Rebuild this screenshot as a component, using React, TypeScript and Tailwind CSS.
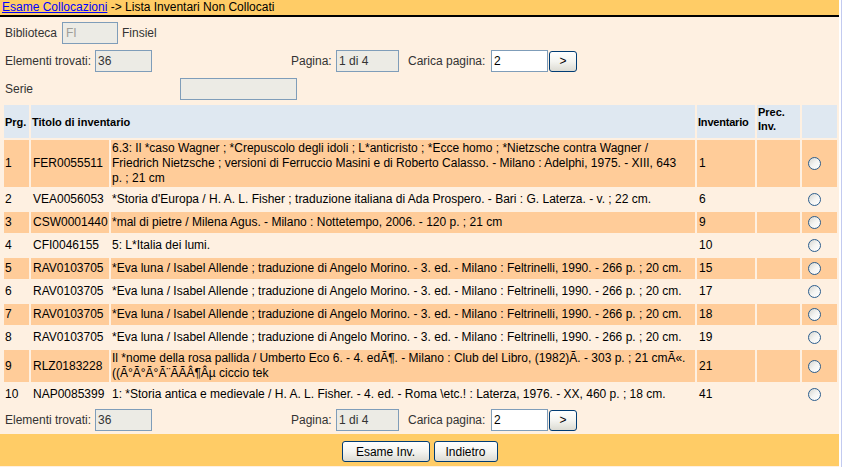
import React from "react";

interface Riga {
  prg: number;
  codice: string;
  titolo: string[];
  inventario: string;
}

const righe: Riga[] = [
  {
    prg: 1,
    codice: "FER0055511",
    titolo: [
      "6.3: Il *caso Wagner ; *Crepuscolo degli idoli ; L*anticristo ; *Ecce homo ; *Nietzsche contra Wagner /",
      "Friedrich Nietzsche ; versioni di Ferruccio Masini e di Roberto Calasso. - Milano : Adelphi, 1975. - XIII, 643",
      "p. ; 21 cm",
    ],
    inventario: "1",
  },
  {
    prg: 2,
    codice: "VEA0056053",
    titolo: ["*Storia d'Europa / H. A. L. Fisher ; traduzione italiana di Ada Prospero. - Bari : G. Laterza. - v. ; 22 cm."],
    inventario: "6",
  },
  {
    prg: 3,
    codice: "CSW0001440",
    titolo: ["*mal di pietre / Milena Agus. - Milano : Nottetempo, 2006. - 120 p. ; 21 cm"],
    inventario: "9",
  },
  { prg: 4, codice: "CFI0046155", titolo: ["5: L*Italia dei lumi."], inventario: "10" },
  {
    prg: 5,
    codice: "RAV0103705",
    titolo: ["*Eva luna / Isabel Allende ; traduzione di Angelo Morino. - 3. ed. - Milano : Feltrinelli, 1990. - 266 p. ; 20 cm."],
    inventario: "15",
  },
  {
    prg: 6,
    codice: "RAV0103705",
    titolo: ["*Eva luna / Isabel Allende ; traduzione di Angelo Morino. - 3. ed. - Milano : Feltrinelli, 1990. - 266 p. ; 20 cm."],
    inventario: "17",
  },
  {
    prg: 7,
    codice: "RAV0103705",
    titolo: ["*Eva luna / Isabel Allende ; traduzione di Angelo Morino. - 3. ed. - Milano : Feltrinelli, 1990. - 266 p. ; 20 cm."],
    inventario: "18",
  },
  {
    prg: 8,
    codice: "RAV0103705",
    titolo: ["*Eva luna / Isabel Allende ; traduzione di Angelo Morino. - 3. ed. - Milano : Feltrinelli, 1990. - 266 p. ; 20 cm."],
    inventario: "19",
  },
  {
    prg: 9,
    codice: "RLZ0183228",
    titolo: [
      "Il *nome della rosa pallida / Umberto Eco 6. - 4. edÃ¶. - Milano : Club del Libro, (1982)Ã. - 303 p. ; 21 cmÃ«.",
      "((Ã°Ã°Ã°Ã¨ÃÃÂ¶Âµ ciccio tek",
    ],
    inventario: "21",
  },
  {
    prg: 10,
    codice: "NAP0085399",
    titolo: ["1: *Storia antica e medievale / H. A. L. Fisher. - 4. ed. - Roma \\etc.! : Laterza, 1976. - XX, 460 p. ; 18 cm."],
    inventario: "41",
  },
];

function Radio() {
  return (
    <span className="block w-[13px] h-[13px] rounded-full border border-[#2c5e8e] bg-gradient-to-br from-[#d6d6d0] via-[#f4f4f2] to-white"></span>
  );
}

function XpButton({ label, className }: { label: string; className?: string }) {
  return (
    <button
      type="button"
      className={
        "h-[21px] rounded-[3px] border border-[#003c74] bg-gradient-to-b from-white via-[#f4f4f0] to-[#dcdbd3] text-[12px] text-black leading-none " +
        (className ?? "")
      }
    >
      {label}
    </button>
  );
}

function Paginazione() {
  return (
    <div className="flex items-center h-[22px] pl-[5px] text-[#333]">
      <span className="w-[90px]">Elementi trovati:</span>
      <input
        readOnly
        value="36"
        className="w-[57px] h-[22px] border border-[#7f9db9] bg-[#ecebe5] px-[2px] text-[#333] outline-none"
      />
      <span className="ml-[139px] w-[45px]">Pagina:</span>
      <input
        readOnly
        value="1 di 4"
        className="w-[63px] h-[22px] border border-[#7f9db9] bg-[#ecebe5] px-[2px] text-[#333] outline-none"
      />
      <span className="ml-[9px] w-[83px]">Carica pagina:</span>
      <input
        readOnly
        value="2"
        className="w-[57px] h-[22px] border border-[#7f9db9] bg-white px-[2px] text-black outline-none"
      />
      <XpButton label=">" className="w-[28px] ml-px" />
    </div>
  );
}

export default function App() {
  return (
    <div className="w-[842px] h-[467px] flex bg-white font-['Liberation_Sans',Arial,sans-serif] text-[12px] text-black overflow-hidden">
      <div className="w-[839px] bg-[#fef0e1] flex flex-col">
        {/* Intestazione */}
        <div className="h-[15px] bg-[#ffcc66] border-b-2 border-black box-content pl-[2px] leading-[15px] whitespace-nowrap">
          <a href="#" className="text-[#0000ff] underline">
            Esame Collocazioni
          </a>
          <span> -&gt; Lista Inventari Non Collocati</span>
        </div>

        {/* Filtri */}
        <div className="flex flex-col gap-[6px] pt-[5px]">
          <div className="flex items-center h-[22px] pl-[5px] text-[#333]">
            <span className="w-[57px]">Biblioteca</span>
            <input
              readOnly
              value="FI"
              className="w-[56px] h-[22px] border border-[#7f9db9] bg-[#ecebe5] px-[3px] text-[#a09e98] outline-none"
            />
            <span className="ml-[4px]">Finsiel</span>
          </div>
          <Paginazione />
          <div className="flex items-center h-[22px] pl-[5px] text-[#333]">
            <span className="w-[175px]">Serie</span>
            <input
              readOnly
              value=""
              className="w-[117px] h-[22px] border border-[#7f9db9] bg-[#ecebe5] outline-none"
            />
          </div>
        </div>

        {/* Tabella */}
        <table className="mt-[3px] ml-[2px] w-[837px] table-fixed border-separate border-spacing-[2px]">
          <colgroup>
            <col className="w-[25px]" />
            <col className="w-[78px]" />
            <col />
            <col className="w-[58px]" />
            <col className="w-[43px]" />
            <col className="w-[35px]" />
          </colgroup>
          <thead>
            <tr className="bg-[#dfe8f1] text-[11px] font-bold leading-[14px]">
              <th className="h-[33px] px-px text-left align-middle">Prg.</th>
              <th colSpan={2} className="px-px text-left align-middle">
                Titolo di inventario
              </th>
              <th className="px-px text-left align-middle tracking-[-0.2px]">Inventario</th>
              <th className="px-px text-left align-top">Prec. Inv.</th>
              <th></th>
            </tr>
          </thead>
          <tbody>
            {righe.map((r) => (
              <tr key={r.prg} className={r.prg % 2 === 1 ? "bg-[#ffcc99]" : ""}>
                <td className="h-[21px] px-px py-px align-middle leading-[15px]">{r.prg}</td>
                <td className="px-[2px] py-px align-middle leading-[15px] whitespace-nowrap">{r.codice}</td>
                <td className="px-px py-px align-middle leading-[15px] whitespace-nowrap">
                  {r.titolo.map((t, i) => (
                    <div key={i}>{t}</div>
                  ))}
                </td>
                <td className="px-[2px] py-px align-middle leading-[15px]">{r.inventario}</td>
                <td></td>
                <td className="pl-[6px] align-middle">
                  <Radio />
                </td>
              </tr>
            ))}
          </tbody>
        </table>

        <div className="mt-[2px]">
          <Paginazione />
        </div>

        {/* Pulsanti */}
        <div className="mt-[3px] h-[32px] bg-[#ffcc66] flex justify-center items-start pt-[7px] gap-[4px]">
          <XpButton label="Esame Inv." className="w-[88px]" />
          <XpButton label="Indietro" className="w-[64px]" />
        </div>
      </div>
      <div className="w-[2px] bg-white"></div>
      <div className="w-px bg-[#c3cbf0]"></div>
    </div>
  );
}
